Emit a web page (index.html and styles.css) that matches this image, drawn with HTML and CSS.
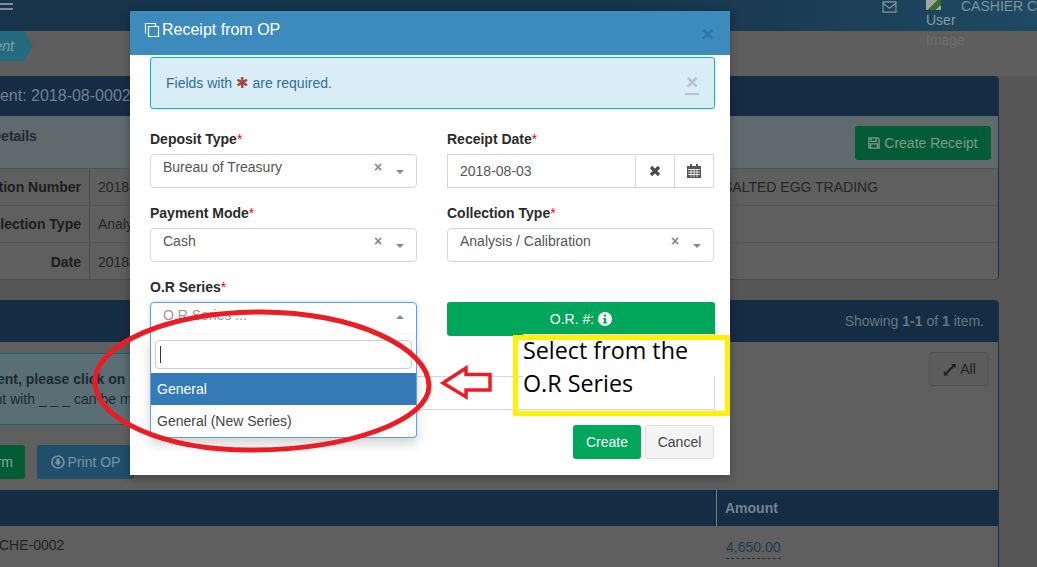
FILE: index.html
```html
<!DOCTYPE html>
<html lang="en">
<head>
<meta charset="utf-8">
<title>Receipt from OP</title>
<link rel="stylesheet" href="styles.css">
</head>
<body>
<div class="page">
  <header class="topbar">
    <div class="burger"><i></i><i></i></div>
    <div class="top-right">
      <svg class="mail" viewBox="0 0 16 13" width="15" height="12"><path d="M1 1h14v11H1zM1 2.500l7 5.500 7-5.500" fill="none" stroke="#8a9ba6" stroke-width="1.200"/></svg>
      <div class="user-img"><span class="broken"></span><span>User</span><span class="dim">Image</span></div>
      <span class="user-name">CASHIER CASHIER</span>
    </div>
  </header>
  <nav class="crumbs"><span class="crumb">Payment</span></nav>

  <section class="panel panel-one">
    <div class="panel-head">Payment: 2018-08-0002</div>
    <div class="sub-head">
      <strong>Details</strong>
      <span class="btn-dark-green">
        <svg viewBox="0 0 14 14" width="12" height="12"><path d="M1 1h10l2 2v10H1zM3.500 1v4h6V1M3 13V8h8v5" fill="none" stroke="#7f9b8e" stroke-width="1.500"/></svg>
        Create Receipt
      </span>
    </div>
    <div class="detail-row"><b>Collection Number</b><span>2018-08-0002</span><span class="payor">SALTED EGG TRADING</span></div>
    <div class="detail-row"><b>Collection Type</b><span>Analysis / Calibration</span></div>
    <div class="detail-row last"><b>Date</b><span>2018-08-03</span></div>
  </section>

  <section class="panel panel-two">
    <div class="panel-head two">Showing&nbsp;<b>1-1</b>&nbsp;of&nbsp;<b>1</b>&nbsp;item.</div>
    <div class="panel-body">
      <div class="info-col">
        <div class="info-box">
          <p><b>For payment, please click on collection</b></p>
          <p>Amount with _ _ _ can be modified</p>
        </div>
        <div class="actions">
          <span class="act green">Confirm</span>
          <span class="act blue">
            <svg viewBox="0 0 14 14" width="14" height="14"><circle cx="7" cy="7" r="6" fill="none" stroke="#7d96a6" stroke-width="1.600"/><path d="M5.500 3.500h3V7h2L7 10.700 3.500 7h2z" fill="#7d96a6"/></svg>
            Print OP
          </span>
        </div>
      </div>
      <span class="all-btn">
        <svg viewBox="0 0 16 16" width="15" height="15"><path d="M9.500 2H14.500V7L12.800 5.300 5.300 12.800 7 14.500H2V9.500L3.700 11.200 11.200 3.700z" fill="#1f1f1f"/></svg>
        All
      </span>
    </div>
    <div class="tbl-head"><span class="cell-a"></span><b class="cell-b">Amount</b></div>
    <div class="tbl-row"><span class="cell-a">CHE-0002</span><span class="cell-b"><a class="amount">4,650.00</a></span></div>
  </section>
</div>

<div class="modal">
  <div class="modal-head">
    <h4>
      <svg viewBox="0 0 16 16" width="16" height="16"><path d="M1.500 11.500V1.500H11.500V4.500M4.500 4.500H14.500V14.500H4.500z" fill="none" stroke="#fff" stroke-width="1.200"/></svg>
      Receipt from OP
    </h4>
    <span class="modal-x">×</span>
  </div>
  <div class="modal-body">
    <div class="req-alert">
      <span>Fields with <span class="star">✱</span> are required.</span>
      <span class="alert-x">×</span>
    </div>
    <div class="form-grid">
      <div class="field">
        <label>Deposit Type<em>*</em></label>
        <div class="sel"><span>Bureau of Treasury</span><i class="clr">×</i><i class="caret"></i></div>
      </div>
      <div class="field">
        <label>Receipt Date<em>*</em></label>
        <div class="date">
          <span class="date-val">2018-08-03</span>
          <span class="date-btn"><svg viewBox="0 0 12 12" width="12" height="12"><path d="M2 2l8 8M10 2l-8 8" stroke="#4a4a4a" stroke-width="3.200"/></svg></span>
          <span class="date-btn"><svg viewBox="0 0 14 14" width="14" height="14"><path d="M0 2h14v12H0z" fill="#555"/><path d="M3 0h2v3H3zM9 0h2v3H9z" fill="#555"/><path d="M1 5.500h12M1 8h12M1 10.500h12M4 5.500v7.500M7 5.500v7.500M10 5.500v7.500" stroke="#fff" stroke-width=".8"/></svg></span>
        </div>
      </div>
      <div class="field">
        <label>Payment Mode<em>*</em></label>
        <div class="sel"><span>Cash</span><i class="clr">×</i><i class="caret"></i></div>
      </div>
      <div class="field">
        <label>Collection Type<em>*</em></label>
        <div class="sel"><span>Analysis / Calibration</span><i class="clr">×</i><i class="caret"></i></div>
      </div>
      <div class="field">
        <label>O.R Series<em>*</em></label>
        <div class="sel open"><span class="ph">O.R Series ...</span><i class="caret up"></i></div>
      </div>
      <div class="field">
        <label class="ghost">O.R</label>
        <div class="or-btn">O.R. #:
          <svg viewBox="0 0 14 14" width="14" height="14"><circle cx="7" cy="7" r="7" fill="#fff"/><path d="M5.800 2.500h2.400v2H5.800zM5 6h3.200v4.200H9.200v1.300H4.900v-1.300H5.900V7.300H5z" fill="#00a65a"/></svg>
        </div>
      </div>
    </div>
    <div class="or-table"></div>
    <div class="modal-foot">
      <span class="btn-create">Create</span>
      <span class="btn-cancel">Cancel</span>
    </div>
  </div>
</div>

<div class="dropdown">
  <div class="search"><i class="cursor"></i></div>
  <div class="opt active">General</div>
  <div class="opt">General (New Series)</div>
</div>

<div class="note">Select from the O.R Series</div>
<svg class="marks" viewBox="0 0 1037 567" width="1037" height="567">
  <path d="M95 380C97 345 165 312 262 312C352 312 429 347 429 386C429 420 350 450 250 450C165 450 93 420 95 380Z" fill="none" stroke="#ed1c24" stroke-width="5"/>
  <path d="M443 383L466 368V374.500H490V390H466V397Z" fill="#fff" stroke="#ed1c24" stroke-width="3.500" stroke-linejoin="miter"/>
  <rect x="515.500" y="337.500" width="212" height="76" fill="none" stroke="#fff200" stroke-width="5"/>
</svg>
</body>
</html>
```

FILE: styles.css
```css
* { box-sizing: border-box; }
html, body { margin: 0; padding: 0; width: 1037px; height: 567px; overflow: hidden; }
body { font-family: "Liberation Sans", Arial, sans-serif; font-size: 14px; color: #262626; background: #565656; position: relative; }
p { margin: 0; }

.page { width: 1037px; height: 567px; overflow: hidden; display: flex; flex-direction: column; }

.topbar { height: 31px; flex: none; display: flex; justify-content: space-between; background: linear-gradient(90deg, #17344a 0%, #17344a 60%, #1f4a63 100%); }
.burger { width: 13px; display: flex; flex-direction: column; gap: 3px; padding-top: 3px; }
.burger i { display: block; height: 2px; background: #7e8f99; }
.top-right { display: flex; align-items: flex-start; width: 155px; flex: none; }
.mail { margin-top: 1px; margin-right: 29px; flex: none; }
.user-img { width: 35px; flex: none; display: flex; flex-direction: column; font-size: 14px; line-height: 20px; color: #8a9ba6; position: relative; z-index: 1; }
.user-img .broken { height: 10px; width: 15px; background: linear-gradient(135deg, #9aa7a3 0 45%, #3d6a2f 45% 80%, #9aa7a3 80%); display: block; }
.user-img .dim { color: #6d6d6d; }
.user-name { font-size: 14px; line-height: 13px; color: #7f929e; white-space: nowrap; }

.crumbs { height: 45px; flex: none; background: #5e5e5e; }
.crumb { display: inline-flex; align-items: center; justify-content: flex-end; width: 33px; height: 30px; overflow: hidden; padding-right: 19px; color: #7fa3ad; font-style: italic; font-size: 14px; background: #256a7d; clip-path: polygon(0 0, 24px 0, 33px 15px, 24px 30px, 0 30px); white-space: nowrap; }

.panel { flex: none; width: 1099px; margin-left: -100px; background: #5f5f5f; border-right: 1px solid #1e3347; }
.panel-one { height: 204px; border-bottom: 1px solid #4b4b4b; border-radius: 0 4px 4px 0; }
.panel-two { margin-top: 20px; height: 270px; border-radius: 0 4px 0 0; }
.panel-head { height: 40px; background: #152c45; color: #75818c; font-size: 16px; line-height: 40px; padding-left: 59px; border-radius: 0 4px 0 0; }
.panel-head.two { height: 42px; display: flex; align-items: center; justify-content: flex-end; padding: 0 14px 0 0; font-size: 14px; color: #69767f; }

.sub-head { height: 52px; background: #5e6a6b; display: flex; justify-content: space-between; padding: 12px 7px 0 91px; }
.sub-head strong { line-height: 16px; color: #1e2a33; }
.btn-dark-green { display: inline-flex; align-items: center; justify-content: center; gap: 4px; width: 136px; height: 34px; margin-top: -2px; background: #045c35; border-radius: 3px; color: #7f9b8e; font-size: 14px; }

.detail-row { height: 37px; display: grid; grid-template-columns: 190px 633px 1fr; align-items: center; border-top: 1px solid #565656; }
.detail-row b { text-align: right; padding-right: 8px; height: 100%; display: flex; align-items: center; justify-content: flex-end; border-right: 1px solid #4b4b4b; color: #1d1d1d; }
.detail-row span { padding-left: 8px; color: #262626; white-space: nowrap; }
.detail-row .payor { padding-left: 0; }
.detail-row.last { height: 38px; }

.panel-body { height: 148px; background: #5f5f5f; display: flex; justify-content: space-between; padding: 10px 9px 0 0; }
.info-col { width: 240px; flex: none; display: flex; flex-direction: column; }
.info-box { height: 72px; background: #5a6e75; border: 1px solid #17606f; padding: 15px 0 0 0; font-size: 14px; line-height: 20px; color: #1a2a33; white-space: nowrap; overflow: hidden; margin-top: 1px; }
.info-box p:first-child { padding-left: 33px; }
.info-box p:last-child { padding-left: 57px; }
.actions { display: flex; gap: 12px; margin-top: 20px; }
.act { height: 34px; flex: none; display: inline-flex; align-items: center; justify-content: center; border-radius: 3px; color: #7d96a6; font-size: 14px; gap: 3px; }
.act.green { width: 125px; background: #045c35; color: #8aa89a; padding-left: 52px; }
.act.blue { width: 97px; background: #1f4f6b; }
.all-btn { width: 60px; height: 34px; border: 1px solid #525252; border-radius: 3px; display: inline-flex; align-items: center; justify-content: center; gap: 3px; color: #222; background: #5c5c5c; }

.tbl-head { height: 36px; background: #152c45; display: flex; color: #78838e; }
.tbl-row { height: 42px; display: flex; padding-top: 11px; color: #222; }
.cell-a { width: 816px; padding-left: 99px; flex: none; }
.cell-b { padding-left: 8px; border-left: 1px solid #75818c; line-height: 36px; flex: 1; }
.tbl-row .cell-b { border-left: 0; line-height: 16px; padding-left: 10px; }
.amount { color: #1c3a52; border-bottom: 1px dashed #1c2c3a; padding-bottom: 3px; display: inline-block; margin-top: 2px; }

.modal { position: absolute; left: 130px; top: 11px; width: 600px; height: 464px; background: #fff; box-shadow: 0 3px 9px rgba(0,0,0,.3); }
.modal-head { height: 44px; background: #3d8bbd; display: flex; justify-content: space-between; color: #fff; padding: 0 14px; }
.modal-head h4 { margin: 0; font-weight: 400; font-size: 16px; line-height: 37px; display: flex; align-items: center; gap: 2px; height: 37px; }
.modal-x { font-size: 21px; font-weight: 700; color: #33739f; line-height: 46px; padding-right: 2px; }
.modal-body { padding: 2px 15px 0 20px; }
.req-alert { height: 52px; width: 565px; background: #d9edf7; border: 1px solid #00b3d9; border-radius: 3px; color: #31708f; display: flex; justify-content: space-between; align-items: center; padding: 0 15px 0 15px; font-size: 14px; }
.star { color: #a94442; font-size: 15px; font-family: "DejaVu Sans", sans-serif; }
.alert-x { font-size: 20px; font-weight: 700; line-height: 20px; color: #b5c3cb; border-bottom: 2px solid #b5c3cb; height: 23px; padding: 0 1px; }
.form-grid { display: grid; grid-template-columns: 267px 267px; column-gap: 30px; row-gap: 15px; margin-top: 20px; height: 247px; align-content: start; }
.field { display: flex; flex-direction: column; height: 59px; }
label { font-weight: 700; color: #2b2b2b; line-height: 20px; height: 25px; }
label em { color: #f00; font-style: normal; font-weight: 400; }
label.ghost { visibility: hidden; }
.sel { height: 34px; border: 1px solid #d2d6de; border-radius: 4px; padding: 3px 12px; color: #555; line-height: 18px; display: flex; position: relative; }
.sel span { flex: 1; white-space: nowrap; }
.ph { color: #999; }
.clr { position: absolute; left: 223px; top: 3px; font-style: normal; font-weight: 700; font-size: 14px; line-height: 18px; color: #888; }
.caret { position: absolute; right: 12px; top: 15px; width: 0; height: 0; border: 4px solid transparent; border-top: 4px solid #888; border-bottom: 0; }
.caret.up { top: 12px; border-top: 0; border-bottom: 4px solid #888; }
.sel.open { border-color: #5da0de; box-shadow: 0 0 4px rgba(93,160,222,.4); border-bottom-left-radius: 0; border-bottom-right-radius: 0; }
.date { height: 34px; display: flex; border: 1px solid #d2d6de; color: #555; align-items: center; width: 267px; }
.date-val { flex: 1; padding-left: 12px; }
.date-btn { width: 39px; height: 100%; border-left: 1px solid #d2d6de; display: flex; align-items: center; justify-content: center; }
.or-btn { height: 34px; width: 268px; background: #00a65a; color: #fff; display: flex; align-items: center; justify-content: center; gap: 4px; border-radius: 3px; }
.or-table { height: 34px; width: 565px; border-top: 1px solid #d2d6de; border-bottom: 1px solid #d2d6de; border-right: 1px solid #d2d6de; }
.modal-foot { display: flex; justify-content: flex-end; gap: 4px; margin-top: 15px; padding-right: 1px; }
.btn-create { width: 68px; height: 34px; background: #00a65a; color: #fff; border-radius: 3px; display: flex; align-items: center; justify-content: center; }
.btn-cancel { width: 69px; height: 34px; background: #f4f4f4; border: 1px solid #ddd; color: #444; border-radius: 3px; display: flex; align-items: center; justify-content: center; }

.dropdown { position: absolute; left: 150px; top: 335px; width: 267px; height: 103px; background: #fff; border: 1px solid #5da0de; border-top: 0; border-radius: 0 0 4px 4px; box-shadow: 0 6px 12px rgba(0,0,0,.175); padding-top: 5px; }
.search { height: 29px; margin: 0 4px; border: 1px solid #ccc; border-radius: 4px; padding: 5px 4px; }
.cursor { display: block; width: 1px; height: 17px; background: #333; }
.opt { height: 32px; padding: 0 6px; display: flex; align-items: center; color: #444; }
.opt.active { margin-top: 4px; background: #337ab7; color: #fff; }

.marks { position: absolute; left: 0; top: 0; pointer-events: none; }
.note { position: absolute; left: 523px; top: 334px; width: 191px; height: 63px; background: #fff; font-family: "Open Sans", sans-serif; font-size: 23.300px; line-height: 33px; color: #000; }
```
